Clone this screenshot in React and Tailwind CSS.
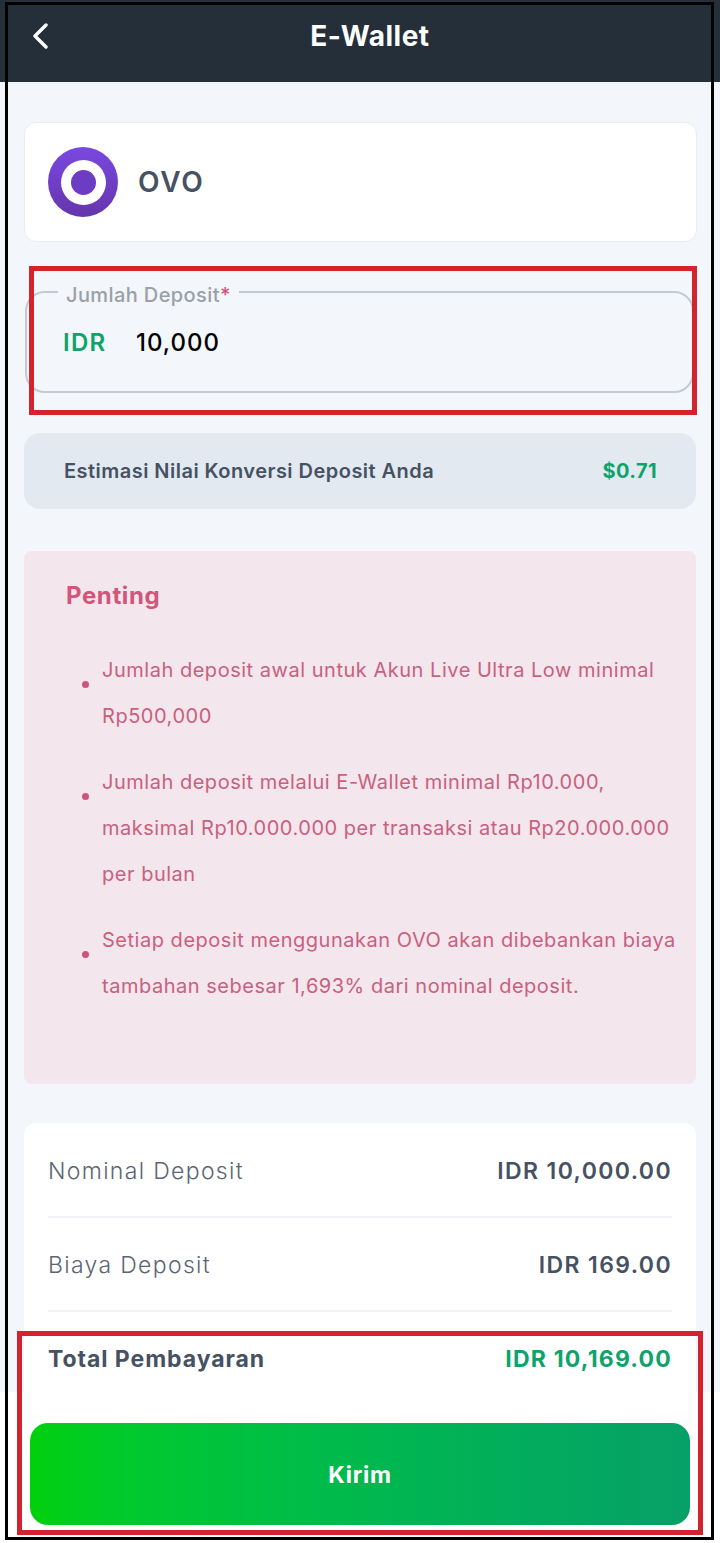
import React from "react";

const Row = ({ label, value }) => (
  <div className="flex h-[94px] items-center justify-between border-b-2 border-[#f1f3f6] pt-[2px]">
    <span className="text-[23px] font-light tracking-[1.33px] text-[#5b6573]">{label}</span>
    <span className="text-[23px] font-semibold tracking-[1.4px] text-[#465162]">{value}</span>
  </div>
);

const Bullet = ({ lines }) => (
  <li className="relative pl-[78px]">
    <span className="absolute left-[58px] top-[34px] h-[7px] w-[7px] rounded-full bg-[#cd5579]" />
    {lines.map((l) => (
      <div key={l} className="h-[46px] whitespace-nowrap leading-[46px] tracking-[0.52px]">{l}</div>
    ))}
  </li>
);

export default function App() {
  return (
    <div className="relative flex h-[1543px] w-[720px] flex-col overflow-hidden bg-white font-['Inter',sans-serif]">
      <header className="relative flex h-[82px] shrink-0 items-center justify-center bg-[#252f3a] pb-[11px] pl-5">
        <svg className="absolute left-[30px] top-[23px]" width="20" height="26" viewBox="0 0 20 26" fill="none">
          <path d="M16 2 L5 13 L16 24" stroke="white" strokeWidth="3.4" strokeLinecap="round" strokeLinejoin="round" />
        </svg>
        <h1 className="text-[28px] font-bold tracking-[0.5px] text-white">E-Wallet</h1>
      </header>

      <main className="h-[1310px] shrink-0 overflow-hidden bg-[#f3f6fa] px-6 pt-10">
        <section className="-mr-px flex h-[120px] items-center gap-5 rounded-xl border border-[#e9edf2] bg-white pl-[23px]">
          <div className="flex h-[70px] w-[70px] items-center justify-center rounded-full bg-gradient-to-b from-[#7a48e0] to-[#6535ad]">
            <div className="flex h-[45px] w-[45px] items-center justify-center rounded-full bg-white">
              <div className="h-[25px] w-[25px] rounded-full bg-[#6d3cc4]" />
            </div>
          </div>
          <span className="text-[28px] font-semibold tracking-[1.8px] text-[#465162]">OVO</span>
        </section>

        <section className="relative ml-px mr-0.5 mt-[49px] h-[102px] rounded-[20px] border-2 border-[#c5cad2]">
          <span className="absolute -top-[8px] left-[31px] h-[26px] bg-[#f3f6fa] px-2 text-[20px] font-medium leading-[20px] tracking-[0.4px] text-[#9aa0a9]">
            <span className="absolute -top-[6px] left-0 h-[8px] w-full bg-[#f3f6fa]" />
            <span className="relative">
              Jumlah Deposit<span className="text-[#d3567a]">*</span>
            </span>
          </span>
          <div className="flex items-center pl-9 pt-[32px]">
            <span className="w-[73px] text-[24px] font-semibold tracking-[1.3px] text-[#0ea36b]">IDR</span>
            <span className="text-[24px] font-medium tracking-[1px] text-black">10,000</span>
          </div>
        </section>

        <section className="mt-10 flex h-[76px] items-center justify-between rounded-2xl bg-[#e2e9f1] pl-10 pr-[39px]">
          <span className="text-[20px] font-semibold tracking-[0.47px] text-[#465162]">Estimasi Nilai Konversi Deposit Anda</span>
          <span className="text-[20px] font-bold tracking-[0.4px] text-[#0ea36b]">$0.71</span>
        </section>

        <section className="mt-[42px] h-[533px] rounded-lg bg-[#f3e6ec] pt-[27px] text-[20px] text-[#c9607f]">
          <h2 className="pl-[42px] text-[24px] font-bold tracking-[0.6px] text-[#d2557a]">Penting</h2>
          <ul className="mt-[33px] flex flex-col gap-5">
            <Bullet lines={["Jumlah deposit awal untuk Akun Live Ultra Low minimal", "Rp500,000"]} />
            <Bullet lines={["Jumlah deposit melalui E-Wallet minimal Rp10.000,", "maksimal Rp10.000.000 per transaksi atau Rp20.000.000", "per bulan"]} />
            <Bullet lines={["Setiap deposit menggunakan OVO akan dibebankan biaya", "tambahan sebesar 1,693% dari nominal deposit."]} />
          </ul>
        </section>

        <section className="mt-[39px] h-[400px] rounded-xl bg-white px-6 pt-px">
          <Row label="Nominal Deposit" value="IDR 10,000.00" />
          <Row label="Biaya Deposit" value="IDR 169.00" />
          <div className="flex h-[94px] items-center justify-between">
            <span className="text-[23px] font-bold tracking-[0.94px] text-[#465162]">Total Pembayaran</span>
            <span className="text-[23px] font-bold tracking-[1.2px] text-[#0ea36b]">IDR 10,169.00</span>
          </div>
        </section>
      </main>

      <footer className="flex-1 bg-white px-[30px] pt-[31px]">
        <button className="h-[102px] w-full rounded-[18px] bg-gradient-to-r from-[#00d10a] to-[#06a067] pt-0.5 text-[23px] font-bold tracking-[0.8px] text-white">
          Kirim
        </button>
      </footer>

      <div className="pointer-events-none absolute left-[5px] top-[2px] h-[1538px] w-[709px] border-[3px] border-black" />
      <div className="pointer-events-none absolute left-[29px] top-[266px] h-[149px] w-[668px] border-[5px] border-[#d2232f]" />
      <div className="pointer-events-none absolute left-[17px] top-[1331px] h-[204px] w-[686px] border-[5px] border-[#d2232f]" />
    </div>
  );
}
